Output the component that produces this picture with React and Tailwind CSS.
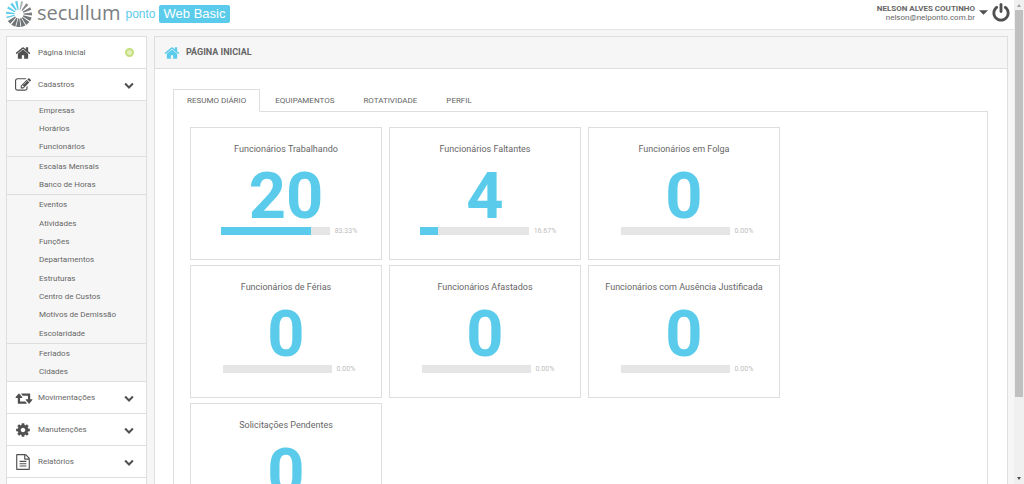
import React, { useState } from 'react';

const icons = {
  home: 'M1472 992v480q0 26-19 45t-45 19h-384v-384h-256v384h-384q-26 0-45-19t-19-45v-480q0-1 .5-3t.5-3l575-474 575 474q1 2 1 6zm223-69l-62 74q-8 9-21 11h-3q-13 0-21-7l-692-577-692 577q-12 8-24 7-13-2-21-11l-62-74q-8-10-7-23.5t11-21.5l719-599q32-26 76-26t76 26l244 204v-195q0-14 9-23t23-9h192q14 0 23 9t9 23v408l219 182q10 8 11 21.5t-7 23.5z',
  edit: 'M888 1184l116-116-152-152-116 116v56h96v96h56zm440-720q-16-16-33 1l-350 350q-17 17-1 33t33-1l350-350q17-17 1-33zm80 594v190q0 119-84.5 203.5t-203.5 84.5h-832q-119 0-203.5-84.5t-84.5-203.5v-832q0-119 84.5-203.5t203.5-84.5h832q63 0 117 25 15 7 18 23 3 17-9 29l-49 49q-14 14-32 8-23-6-45-6h-832q-66 0-113 47t-47 113v832q0 66 47 113t113 47h832q66 0 113-47t47-113v-126q0-13 9-22l64-64q15-15 35-7t20 29zm-96-738l288 288-672 672h-288v-288zm444 132l-92 92-288-288 92-92q28-28 68-28t68 28l152 152q28 28 28 68t-28 68z',
  chevron: 'M1683 808l-742 741q-19 19-45 19t-45-19l-742-741q-19-19-19-45.5t19-45.5l166-165q19-19 45-19t45 19l531 531 531-531q19-19 45-19t45 19l166 165q19 19 19 45.5t-19 45.5z',
  retweet: 'M1344 1504q0 13-9.5 22.5t-22.5 9.5h-960q-8 0-13.5-2t-9-7-5.5-8-3-11.5-1-11.5v-600h-192q-26 0-45-19t-19-45q0-24 15-41l320-384q19-22 49-22t49 22l320 384q15 17 15 41 0 26-19 45t-45 19h-192v384h576q16 0 25 11l160 192q7 10 7 21zm640-416q0 24-15 41l-320 384q-20 23-49 23t-49-23l-320-384q-15-17-15-41 0-26 19-45t45-19h192v-384h-576q-16 0-25-12l-160-192q-7-9-7-20 0-13 9.5-22.5t22.5-9.5h960q8 0 13.5 2t9 7 5.5 8 3 11.5 1 11.5v600h192q26 0 45 19t19 45z',
  cog: 'M1152 896q0-106-75-181t-181-75-181 75-75 181 75 181 181 75 181-75 75-181zm512-109v222q0 12-8 23t-20 13l-185 28q-19 54-39 91 35 50 107 138 10 12 10 25t-9 23q-27 37-99 108t-94 71q-12 0-26-9l-138-108q-44 23-91 38-16 136-29 186-7 28-36 28h-222q-14 0-24.5-8.5t-11.5-21.5l-28-184q-49-16-90-37l-141 107q-10 9-25 9-14 0-25-11-126-114-165-168-7-10-7-23 0-12 8-23 15-21 51-66.5t54-70.5q-27-50-41-99l-183-27q-13-2-21-12.5t-8-23.5v-222q0-12 8-23t19-13l186-28q14-46 39-92-40-57-107-138-10-12-10-24 0-10 9-23 26-36 98.5-107.5t94.5-71.5q13 0 26 10l138 107q44-23 91-38 16-136 29-186 7-28 36-28h222q14 0 24.5 8.5t11.5 21.5l28 184q49 16 90 37l142-107q9-9 24-9 13 0 25 10 129 119 165 170 7 8 7 22 0 12-8 23-15 21-51 66.5t-54 70.5q26 50 41 98l183 28q13 2 21 12.5t8 23.5z',
  file: 'M1596 380q28 28 48 76t20 88v1152q0 40-28 68t-68 28h-1344q-40 0-68-28t-28-68v-1600q0-40 28-68t68-28h896q40 0 88 20t76 48zm-444-244v376h376q-10-29-22-41l-313-313q-12-12-41-22zm384 1528v-1024h-416q-40 0-68-28t-28-68v-416h-768v1536h1280zm-1024-864q0-14 9-23t23-9h704q14 0 23 9t9 23v64q0 14-9 23t-23 9h-704q-14 0-23-9t-9-23v-64zm736 224q14 0 23 9t9 23v64q0 14-9 23t-23 9h-704q-14 0-23-9t-9-23v-64q0-14 9-23t23-9h704zm0 256q14 0 23 9t9 23v64q0 14-9 23t-23 9h-704q-14 0-23-9t-9-23v-64q0-14 9-23t23-9h704z',
  power: 'M1664 896q0 156-61 298t-164 245-245 164-298 61-298-61-245-164-164-245-61-298q0-182 80.5-343t226.5-270q43-32 95.5-25t83.5 50q32 42 24.5 94.5t-49.5 84.5q-98 74-151.5 181t-53.5 228q0 104 40.5 198.5t109.5 163.5 163.5 109.5 198.5 40.5 198.5-40.5 163.5-109.5 109.5-163.5 40.5-198.5q0-121-53.5-228t-151.5-181q-42-32-49.5-84.5t24.5-94.5q31-43 84-50t95 25q146 109 226.5 270t80.5 343zm-640-768v640q0 52-38 90t-90 38-90-38-38-90v-640q0-52 38-90t90-38 90 38 38 90z',
};

const Icon = ({ name, className }) => (
  <svg viewBox={name === 'retweet' ? '0 0 2048 1792' : '0 0 1792 1792'} className={className} fill="currentColor" aria-hidden="true">
    <path d={icons[name]} />
  </svg>
);

const cadastros = [
  { height: 'h-14', items: ['Empresas', 'Horários', 'Funcionários'] },
  { height: 'h-[38px]', items: ['Escalas Mensais', 'Banco de Horas'] },
  { height: 'h-[149px]', items: ['Eventos', 'Atividades', 'Funções', 'Departamentos', 'Estruturas', 'Centro de Custos', 'Motivos de Demissão', 'Escolaridade'] },
  { height: 'h-[38px]', items: ['Feriados', 'Cidades'] },
];

const cards = [
  { title: 'Funcionários Trabalhando', count: 20, percent: 83.33 },
  { title: 'Funcionários Faltantes', count: 4, percent: 16.67 },
  { title: 'Funcionários em Folga', count: 0, percent: 0 },
  { title: 'Funcionários de Férias', count: 0, percent: 0 },
  { title: 'Funcionários Afastados', count: 0, percent: 0 },
  { title: 'Funcionários com Ausência Justificada', count: 0, percent: 0 },
  { title: 'Solicitações Pendentes', count: 0, percent: 0 },
];

const tabs = ['RESUMO DIÁRIO', 'EQUIPAMENTOS', 'ROTATIVIDADE', 'PERFIL'];

// angle, colour, half width at the outer end
const rays = [
  [14, '#a9aeb1', 1],
  [40, '#85898c', 1.4],
  [65, '#797d80', 1.5],
  [90, '#797d80', 1.6],
  [114, '#707477', 1.9],
  [137, '#707477', 2.1],
  [160, '#707477', 2.2],
  [183, '#707477', 2.2],
  [206, '#707477', 2.2],
  [230, '#707477', 1.9],
  [254, '#5acbea', 0.8],
  [276, '#5acbea', 1],
  [300, '#5acbea', 1.1],
  [324, '#5acbea', 1.3],
  [348, '#5acbea', 1.2],
];

const Logo = () => (
  <svg viewBox="-13 -13 26 26" className="size-[26px]" aria-hidden="true">
    {rays.map(([angle, color, w]) => (
      <polygon key={angle} points={`-0.6,-4.5 0.6,-4.5 ${w},-13 ${-w},-13`} fill={color} transform={`rotate(${angle})`} />
    ))}
  </svg>
);

const MenuRow = ({ icon, label, iconClass, children }) => (
  <button className="flex h-8 w-full shrink-0 items-center border-b border-[#dedede] bg-white pl-2 pr-3 text-left">
    <span className="flex w-[23px] shrink-0">
      <Icon name={icon} className={iconClass} />
    </span>
    <span className="grow">{label}</span>
    {children || <Icon name="chevron" className="size-2.5 text-[#505050]" />}
  </button>
);

const Sidebar = () => (
  <nav className="w-[141px] shrink-0 border border-b-0 border-[#dedede] bg-[#f6f6f6]">
    <MenuRow icon="home" label="Página Inicial" iconClass="size-4 text-[#505050]">
      <span className="size-[9px] rounded-full border-2 border-[#c3df7c] bg-[#e3f0bd]" />
    </MenuRow>
    <MenuRow icon="edit" label="Cadastros" iconClass="size-4 text-[#505050]" />
    {cadastros.map((group) => (
      <ul key={group.items[0]} className={`flex flex-col border-b border-[#dedede] pt-px ${group.height}`}>
        {group.items.map((item) => (
          <li key={item} className="flex flex-1 items-center pl-8">
            <a href="#">{item}</a>
          </li>
        ))}
      </ul>
    ))}
    <MenuRow icon="retweet" label="Movimentações" iconClass="h-4 w-[18px] text-[#505050]" />
    <MenuRow icon="cog" label="Manutenções" iconClass="size-4 text-[#505050]" />
    <MenuRow icon="file" label="Relatórios" iconClass="size-4 text-[#505050]" />
    <div className="h-8 bg-white"></div>
  </nav>
);

const Card = ({ title, count, percent }) => (
  <section className="flex h-[133px] w-48 flex-col items-center border border-[#dedede] pt-[15px]">
    <h2 className="whitespace-nowrap text-[9px] leading-3">{title}</h2>
    <div className="mt-2.5 text-[65px] font-bold leading-[62px] text-[#5acbea]">{count}</div>
    <div className="flex h-2 items-center gap-[5px] pl-1.5">
      <div className="h-2 w-[109px] bg-[#e5e5e5]">
        <div className="h-2 bg-[#5acbea]" style={{ width: `${percent}%` }}></div>
      </div>
      <span className="text-[7px] text-[#bdbdbd]">{percent.toFixed(2)}%</span>
    </div>
  </section>
);

const App = () => {
  const [tab, setTab] = useState('RESUMO DIÁRIO');

  return (
    <div className="flex h-screen overflow-hidden bg-[#f6f6f6] font-[Roboto,sans-serif] text-[8px] text-[#666]">
      <div className="flex min-w-0 grow flex-col">
        <header className="flex h-[30px] shrink-0 items-center justify-between border-b border-[#e4e4e4] bg-white pl-1.5 pr-[3px] pb-0.5">
          <div className="flex items-center">
            <Logo />
            <span className="ml-[5px] pb-0.5 font-['Open_Sans',sans-serif] text-[20px] font-medium leading-[26px] text-[#7b7f82]">secullum</span>
            <span className="ml-[5px] font-['Liberation_Sans',sans-serif] text-[12px] leading-4 text-[#5acbea]">ponto</span>
            <span className="ml-[3px] rounded-xs bg-[#5acbea] px-[5px] font-['Liberation_Sans',sans-serif] text-[13px] leading-[18px] text-white">Web Basic</span>
          </div>
          <div className="flex items-center pb-0.5">
            <div className="text-right leading-[9px]">
              <div className="font-bold">NELSON ALVES COUTINHO</div>
              <div>nelson@nelponto.com.br</div>
            </div>
            <button className="ml-1 flex" aria-label="Conta">
              <svg viewBox="0 0 8 4" className="h-[5px] w-[9px]" fill="#505050"><path d="M0 0h8L4 4z" /></svg>
            </button>
            <button className="ml-[3px] flex" aria-label="Sair">
              <Icon name="power" className="size-5 text-[#505050]" />
            </button>
          </div>
        </header>

        <div className="flex min-h-0 grow gap-[7px] px-1.5 pt-1.5">
          <Sidebar />
          <main className="min-w-0 grow border border-b-0 border-[#dedede] bg-white">
            <div className="flex h-8 items-center gap-1.5 border-b border-[#dedede] bg-[#f6f6f6] pl-[9px]">
              <Icon name="home" className="size-4 text-[#5acbea]" />
              <h1 className="text-[9px] font-bold">PÁGINA INICIAL</h1>
            </div>

            <div className="pl-[18px] pr-[19px] pt-5">
              <div className="flex gap-px" role="tablist">
                {tabs.map((name) => (
                  <button
                    key={name}
                    role="tab"
                    aria-selected={tab === name}
                    onClick={() => setTab(name)}
                    className={`h-[23px] border px-[13px] ${tab === name ? 'relative -mb-px border-[#dedede] border-b-white bg-white' : 'border-transparent'}`}
                  >
                    {name}
                  </button>
                ))}
              </div>
              <div className="-mt-px flex h-[520px] flex-wrap content-start gap-x-[7px] gap-y-[5px] border border-[#dedede] px-4 pt-[15px]">
                {cards.map((card) => (
                  <Card key={card.title} {...card} />
                ))}
              </div>
            </div>
          </main>
        </div>
      </div>

      <div className="flex w-2.5 shrink-0 flex-col items-center bg-[#f0f0f0]">
        <div className="flex h-2.5 items-center">
          <svg viewBox="0 0 4 3" className="h-[3px] w-1" fill="#a0a0a0"><path d="M0 3h4L2 0z" /></svg>
        </div>
        <div className="w-2 grow bg-[#c0c0c0]"></div>
        <div className="flex h-[87px] items-end pb-1">
          <svg viewBox="0 0 4 3" className="h-[3px] w-1" fill="#505050"><path d="M0 0h4L2 3z" /></svg>
        </div>
      </div>
    </div>
  );
};

export default App;
